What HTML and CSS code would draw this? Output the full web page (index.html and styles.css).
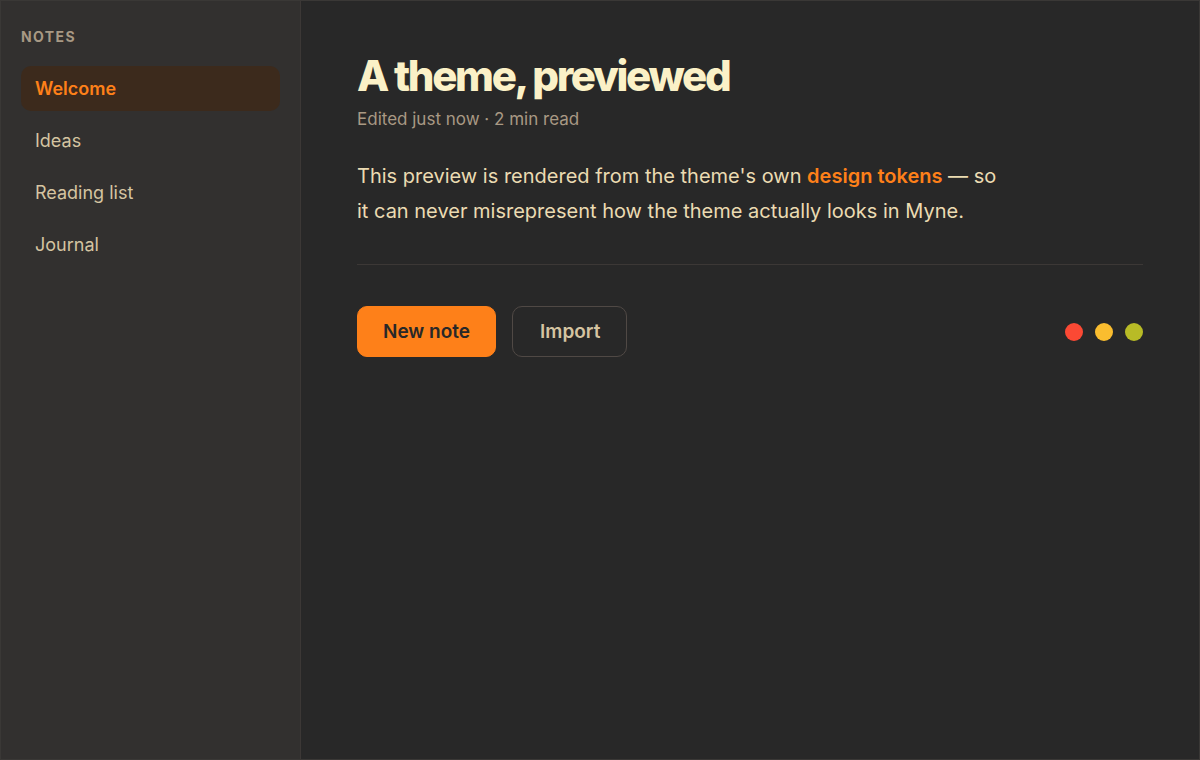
FILE: index.html
```html
<!DOCTYPE html>
<html>
<head>
<meta charset="utf-8">
<link rel="stylesheet" href="styles.css">
</head>
<body>
<div class="app">
  <aside class="sidebar">
    <div class="side-label">NOTES</div>
    <nav class="note-list">
      <div class="note-item active">Welcome</div>
      <div class="note-item">Ideas</div>
      <div class="note-item">Reading list</div>
      <div class="note-item">Journal</div>
    </nav>
  </aside>
  <main class="main">
    <h1 class="title">A theme, previewed</h1>
    <div class="meta">Edited just now · 2 min read</div>
    <p class="body-text">This preview is rendered from the theme's own <span class="link">design tokens</span> — so it can never misrepresent how the theme actually looks in Myne.</p>
    <hr class="divider">
    <div class="actions">
      <button class="btn btn-primary">New note</button>
      <button class="btn btn-secondary">Import</button>
      <div class="spacer"></div>
      <div class="dots">
        <span class="dot red"></span>
        <span class="dot yellow"></span>
        <span class="dot green"></span>
      </div>
    </div>
  </main>
</div>
</body>
</html>
```
FILE: styles.css
```css
* { box-sizing: border-box; }
html, body { margin: 0; padding: 0; background: #282828; }
body { font-family: Inter, "Noto Sans", sans-serif; }
.app {
  width: 1200px;
  height: 760px;
  border: 1px solid #3a3836;
  display: flex;
  background: #282828;
}
.sidebar {
  width: 300px;
  flex: none;
  background: #32302f;
  border-right: 1px solid #3c3836;
  padding: 27px 20px 20px 20px;
}
.side-label {
  font-size: 14px;
  font-weight: 700;
  letter-spacing: 0.1em;
  color: #a89984;
  margin-bottom: 21px;
}
.note-list {
  display: flex;
  flex-direction: column;
  gap: 7px;
}
.note-item {
  height: 45px;
  display: flex;
  align-items: center;
  padding: 0 14px;
  border-radius: 10px;
  font-size: 18px;
  color: #d5c4a1;
}
.note-item.active {
  background: #3c2a1c;
  color: #fe8019;
  font-weight: 600;
}
.main {
  flex: 1;
  padding: 50px 56px 40px 56px;
}
.title {
  margin: 0;
  font-size: 42px;
  font-weight: 800;
  line-height: 1.2;
  letter-spacing: -0.055em;
  color: #fbf1c7;
}
.meta {
  margin-top: 8px;
  font-size: 17px;
  color: #a89984;
}
.body-text {
  margin: 30px 0 0 0;
  max-width: 645px;
  font-size: 20px;
  line-height: 35px;
  color: #ebdbb2;
}
.link {
  color: #fe8019;
  font-weight: 600;
}
.divider {
  border: none;
  border-top: 1px solid #3c3836;
  margin: 35px 0 0 0;
}
.actions {
  display: flex;
  align-items: center;
  gap: 16px;
  margin-top: 41px;
}
.btn {
  font-family: inherit;
  height: 51px;
  border-radius: 10px;
  font-size: 19px;
  font-weight: 600;
  padding: 0 25px;
  cursor: pointer;
}
.btn-primary {
  background: #fe8019;
  color: #282828;
  border: 1px solid #fe8019;
}
.btn-secondary {
  background: transparent;
  color: #d5c4a1;
  border: 1px solid #504945;
  padding: 0 26px 0 27px;
}
.spacer { flex: 1; }
.dots {
  display: flex;
  gap: 12px;
}
.dot {
  width: 18px;
  height: 18px;
  border-radius: 50%;
  display: block;
}
.dot.red { background: #fb4934; }
.dot.yellow { background: #fabd2f; }
.dot.green { background: #b8bb26; }
```
